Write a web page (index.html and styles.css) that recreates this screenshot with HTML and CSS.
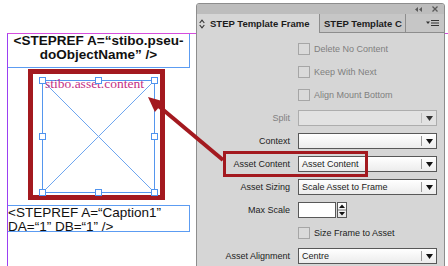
FILE: index.html
```html
<!DOCTYPE html>
<html lang="en">
<head>
    <meta charset="UTF-8">
    <meta name="viewport" content="width=device-width, initial-scale=1.0">
    <title>STEP Template Frame</title>
    <link rel="stylesheet" href="styles.css">
</head>
<body>
    <!-- document spread -->
    <div class="spread">
        <div class="frame frame-title">&lt;STEPREF A=“stibo.pseu-<br>doObjectName” /&gt;</div>
        <div class="highlight">
            <div class="asset-frame">
                <svg class="cross" viewBox="0 0 113 113" preserveAspectRatio="none">
                    <line x1="0.5" y1="0.5" x2="112.5" y2="112.5"/>
                    <line x1="112.5" y1="0.5" x2="0.5" y2="112.5"/>
                </svg>
                <span class="asset-text">stibo.asset.content</span>
                <i class="handle h-tl"></i>
                <i class="handle h-tm"></i>
                <i class="handle h-tr"></i>
                <i class="handle h-ml"></i>
                <i class="handle h-mr"></i>
                <i class="handle h-bl"></i>
                <i class="handle h-bm"></i>
                <i class="handle h-br"></i>
            </div>
        </div>
        <div class="frame frame-caption">&lt;STEPREF A=“Caption1”<br>DA=“1” DB=“1” /&gt;</div>
    </div>

    <!-- floating panel -->
    <div class="panel">
        <div class="panel-bar">
            <svg width="7" height="5" viewBox="0 0 7 5"><polygon points="3,0 3,5 0,2.5" fill="#5a5a5a"/><polygon points="7,0 7,5 4,2.5" fill="#5a5a5a"/></svg>
            <svg width="6" height="6" viewBox="0 0 6 6"><path d="M0.5 0.5 L5.5 5.5 M5.5 0.5 L0.5 5.5" stroke="#5a5a5a" stroke-width="1.3"/></svg>
        </div>
        <div class="tabs">
            <div class="tab tab-active">
                <svg width="6" height="10" viewBox="0 0 6 10"><path d="M0.7 4 L3 1.2 L5.3 4 M0.7 6 L3 8.8 L5.3 6" fill="none" stroke="#333" stroke-width="1.1"/></svg>
                <span>STEP Template Frame</span>
            </div>
            <div class="tab tab-other">STEP Template C</div>
            <div class="tab-menu">
                <svg width="14" height="8" viewBox="0 0 14 8"><polygon points="0,2.5 4,2.5 2,5" fill="#333"/><path d="M5 1.5 H13 M5 4 H13 M5 6.5 H13" stroke="#333" stroke-width="1"/></svg>
            </div>
        </div>

        <div class="panel-body">
            <div class="check-row disabled"><span class="box"></span>Delete No Content</div>
            <div class="check-row disabled"><span class="box"></span>Keep With Next</div>
            <div class="check-row disabled"><span class="box"></span>Align Mount Bottom</div>

            <div class="label disabled">Split</div>
            <div class="select select-off"><span></span><i class="caret"><svg width="7" height="5" viewBox="0 0 7 5"><polygon points="0,0 7,0 3.5,5" fill="#333"/></svg></i></div>

            <div class="label">Context</div>
            <div class="select"><span></span><i class="caret"><svg width="7" height="5" viewBox="0 0 7 5"><polygon points="0,0 7,0 3.5,5" fill="#111"/></svg></i></div>

            <div class="label">Asset Content</div>
            <div class="select"><span>Asset Content</span><i class="caret"><svg width="7" height="5" viewBox="0 0 7 5"><polygon points="0,0 7,0 3.5,5" fill="#111"/></svg></i></div>

            <div class="label">Asset Sizing</div>
            <div class="select"><span>Scale Asset to Frame</span><i class="caret"><svg width="7" height="5" viewBox="0 0 7 5"><polygon points="0,0 7,0 3.5,5" fill="#111"/></svg></i></div>

            <div class="label">Max Scale</div>
            <div class="spin-row">
                <span class="num-input"></span>
                <span class="spinner"><svg width="10" height="16" viewBox="0 0 10 16"><polygon points="2,6 8,6 5,2.5" fill="#111"/><path d="M1 8 H9" stroke="#777" stroke-width="1"/><polygon points="2,10 8,10 5,13.5" fill="#111"/></svg></span>
            </div>

            <div class="check-row"><span class="box"></span>Size Frame to Asset</div>

            <div class="label">Asset Alignment</div>
            <div class="select"><span>Centre</span><i class="caret"><svg width="7" height="5" viewBox="0 0 7 5"><polygon points="0,0 7,0 3.5,5" fill="#111"/></svg></i></div>
        </div>
    </div>

    <!-- annotation -->
    <div class="callout"></div>
    <svg class="arrow" width="448" height="266" viewBox="0 0 448 266">
        <line x1="223" y1="160" x2="158" y2="105.5" stroke="#a3191f" stroke-width="4"/>
        <polygon points="148,97 154.9,112 163.9,101.4" fill="#a3191f"/>
    </svg>
</body>
</html>
```

FILE: styles.css
```css
* {
    box-sizing: border-box;
}
body {
    margin: 0;
    width: 448px;
    height: 266px;
    overflow: hidden;
    position: relative;
    background: #fff;
    font-family: "Liberation Sans", Arial, sans-serif;
}

/* document */
.spread {
    margin: 33px 0 0 7px;
    height: 233px;
    border-top: 1px solid #d64ede;
    border-left: 1px solid #9b40f2;
}
.frame {
    width: 182px;
    border: 1px solid #5c9cf2;
    border-left: 0;
    color: #111;
}
.frame-title {
    border-top: 0;
    height: 34px;
    text-align: center;
    font-weight: bold;
    font-size: 13.5px;
    line-height: 14px;
}
.highlight {
    margin: 1px 0 0 20px;
    width: 137px;
    height: 131px;
    border: 5px solid #a3191f;
    padding: 6px 0 0 9px;
}
.asset-frame {
    position: relative;
    width: 113px;
    height: 113px;
    border: 1px solid #5596ee;
}
.cross {
    position: absolute;
    left: -1px;
    top: -1px;
    width: 113px;
    height: 113px;
}
.cross line {
    stroke: #6ea6f0;
    stroke-width: 1;
}
.asset-text {
    position: relative;
    display: block;
    margin-top: -3px;
    padding-left: 2px;
    font-family: "Liberation Serif", "Times New Roman", serif;
    font-size: 13.5px;
    line-height: 12px;
    color: #c42f85;
}
.handle {
    position: absolute;
    width: 7px;
    height: 7px;
    background: #fff;
    border: 1px solid #4f93ee;
}
.h-tl { left: -4px; top: -4px; }
.h-tm { left: 52px; top: -4px; }
.h-tr { right: -4px; top: -4px; }
.h-ml { left: -4px; top: 52px; }
.h-mr { right: -4px; top: 52px; }
.h-bl { left: -4px; bottom: -4px; }
.h-bm { left: 52px; bottom: -4px; }
.h-br { right: -4px; bottom: -4px; }
.frame-caption {
    margin-top: 5px;
    height: 27px;
    font-size: 13.5px;
    line-height: 14px;
}

/* panel */
.panel {
    position: absolute;
    left: 196px;
    top: 3px;
    width: 249px;
    height: 270px;
    background: #d6d6d6;
    border: 1px solid #8d8d8d;
    border-radius: 3px 3px 0 0;
    font-size: 9px;
    color: #1c1c1c;
}
.panel-bar {
    height: 10px;
    background: #bdbdbd;
    display: flex;
    justify-content: flex-end;
    align-items: center;
    gap: 10px;
    padding-right: 6px;
    border-radius: 2px 2px 0 0;
}
.tabs {
    display: flex;
    height: 19px;
    background: #c6c6c6;
    border-bottom: 1px solid #8d8d8d;
}
.tab {
    display: flex;
    align-items: center;
    font-weight: bold;
    font-size: 9.5px;
    white-space: nowrap;
}
.tab-active {
    width: 122px;
    height: 19px;
    background: #d6d6d6;
    padding-left: 2px;
    gap: 5px;
}
.tab-other {
    width: 87px;
    border-left: 1px solid #8d8d8d;
    border-right: 1px solid #8d8d8d;
    padding-left: 4px;
}
.tab-menu {
    margin-left: auto;
    padding-right: 4px;
    display: flex;
    align-items: center;
}
.panel-body {
    display: grid;
    grid-template-columns: 93px 139px;
    grid-auto-rows: 16px;
    column-gap: 8px;
    row-gap: 7px;
    padding-top: 8px;
}
.label {
    text-align: right;
    align-self: center;
}
.disabled {
    color: #808080;
}
.check-row {
    grid-column: 2;
    display: flex;
    align-items: center;
    gap: 4px;
}
.box {
    width: 12px;
    height: 12px;
    border: 1px solid #a6a6a6;
    background: #dadada;
}
.select {
    display: flex;
    align-items: center;
    height: 16px;
    border: 1px solid #585858;
    background: linear-gradient(#ffffff, #ececec);
    padding-left: 3px;
}
.select span {
    flex: 1;
}
.caret {
    width: 15px;
    height: 10px;
    border-left: 1px solid #9a9a9a;
    display: flex;
    align-items: center;
    justify-content: center;
}
.select-off {
    border-color: #adadad;
    background: #e2e2e2;
}
.select-off .caret {
    border-left-color: #bcbcbc;
}
.spin-row {
    display: flex;
    gap: 1px;
}
.num-input {
    width: 38px;
    height: 16px;
    border: 1px solid #585858;
    background: #fff;
}
.spinner {
    display: flex;
    width: 10px;
    height: 16px;
    border: 1px solid #585858;
    background: linear-gradient(#fff, #e6e6e6);
}
.spinner svg {
    margin: -1px;
}

/* annotation */
.callout {
    position: absolute;
    left: 223px;
    top: 151px;
    width: 145px;
    height: 26px;
    border: 3px solid #a3191f;
}
.arrow {
    position: absolute;
    left: 0;
    top: 0;
}
```
